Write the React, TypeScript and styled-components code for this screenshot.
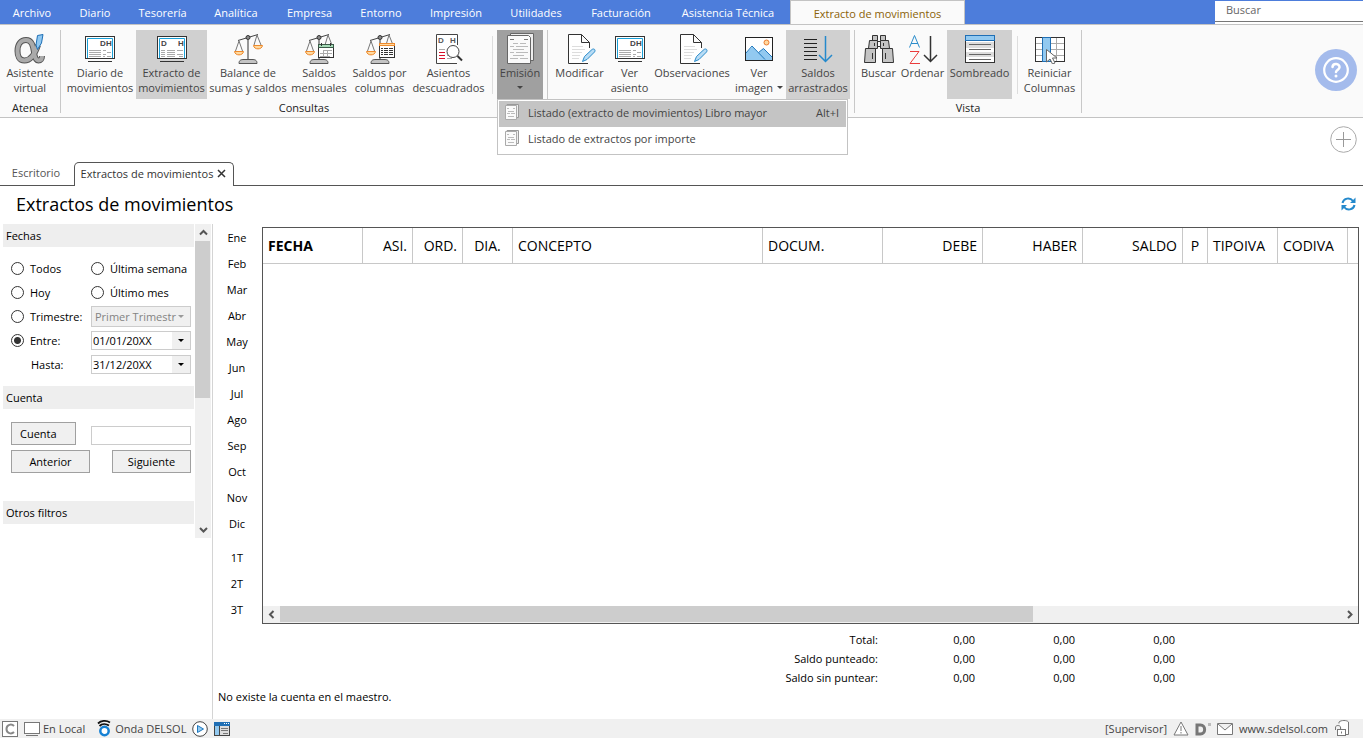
import React from "react";
import styled, { createGlobalStyle } from "styled-components";

const GlobalStyle = createGlobalStyle`
  *, *::before, *::after { box-sizing: border-box; }
  body { margin: 0; background: #fff; color: #000; }
  body, button, input, select { font-family: "Open Sans", "Noto Sans", sans-serif; font-size: 11px; line-height: 15px; }
  button { padding: 0; border: 0; background: none; color: inherit; }
  svg { display: block; flex: none; }
`;

/* ---------- page frame ---------- */

const Page = styled.div`
  display: flex;
  flex-direction: column;
  min-height: 100vh;
`;

const MenuBar = styled.nav`
  display: flex;
  height: 24px;
  background: #4d7ddb;
`;

const MenuTab = styled.button<{ $width: number; $active?: boolean }>`
  width: ${(p) => p.$width}px;
  height: ${(p) => (p.$active ? 25 : 24)}px;
  flex: none;
  white-space: nowrap;
  color: ${(p) => (p.$active ? "#8a6208" : "#fff")};
  background: ${(p) => (p.$active ? "#fafafa" : "transparent")};
  border: solid #c3c3c3;
  border-width: ${(p) => (p.$active ? "1px 1px 0" : "0")};
`;

const SearchBox = styled.div`
  width: 148px;
  margin-left: auto;
  padding-top: 1px;
  height: 24px;
`;

const SearchInput = styled.input`
  display: block;
  width: 100%;
  height: 21px;
  padding: 0 11px 4px;
  border: 0;
  border-bottom: 1px solid #777;
  background: #fff;
  outline: 0;
  box-shadow: 0 2px 0 #fff;
  &::placeholder { color: #666; opacity: 1; }
`;

/* ---------- ribbon ---------- */

const RibbonBar = styled.div`
  display: flex;
  align-items: flex-start;
  height: 94px;
  padding-top: 5px;
  background: #fafafa;
  border: solid #c3c3c3;
  border-width: 1px 0;
`;

const Group = styled.section<{ $pad?: number }>`
  display: flex;
  flex-direction: column;
  height: 83px;
  padding: 0 ${(p) => p.$pad ?? 4}px;
  border-right: 1px solid #c8c8c8;
`;

const GroupButtons = styled.div`
  display: flex;
  height: 69px;
  gap: 1px;
`;

const GroupLabel = styled.div`
  color: #222;
  text-align: center;
  line-height: 18px;
`;

const ThinRule = styled.div`
  width: 1px;
  height: 58px;
  margin: 6px 3px 0 4px;
  background: #ddd;
`;

const ToolButton = styled.button<{ $width: number; $tone?: "on" | "open" }>`
  display: flex;
  flex-direction: column;
  align-items: center;
  width: ${(p) => p.$width}px;
  height: 69px;
  padding-top: 2px;
  gap: 1px;
  white-space: nowrap;
  color: #444;
  background: ${(p) => (p.$tone === "on" ? "#d0d0d0" : p.$tone === "open" ? "#a0a0a0" : "transparent")};
`;

const ToolText = styled.span`
  display: flex;
  align-items: center;
  justify-content: center;
  height: 15px;
  gap: 4px;
`;

const ToolLabel = styled.span`
  display: flex;
  flex-direction: column;
  align-items: center;
`;

const Triangle = styled.i<{ $color?: string }>`
  display: block;
  border: 3px solid transparent;
  border-top-color: ${(p) => p.$color ?? "#444"};
  border-bottom: 0;
`;

const MenuAnchor = styled.div`
  position: relative;
`;

const DropMenu = styled.div`
  position: absolute;
  z-index: 2;
  top: 69px;
  left: 0;
  width: 351px;
  padding: 1px;
  background: #fff;
  border: 1px solid #c3c3c3;
`;

const MenuItem = styled.button<{ $active?: boolean }>`
  display: flex;
  align-items: center;
  gap: 8px;
  width: 100%;
  height: 26px;
  padding: 0 7px 4px 5px;
  color: #444;
  background: ${(p) => (p.$active ? "#c4c4c4" : "#fff")};
`;

const Shortcut = styled.span`
  margin-left: auto;
`;

const HelpButton = styled.button`
  margin: 19px 6px 0 auto;
  width: 42px;
  height: 42px;
`;

/* ---------- document tabs ---------- */

const TabStrip = styled.div`
  display: flex;
  align-items: flex-end;
  height: 68px;
  border-bottom: 1px solid #555;
`;

const DocTab = styled.div<{ $active?: boolean }>`
  display: flex;
  align-items: center;
  justify-content: center;
  gap: 4px;
  width: ${(p) => (p.$active ? 160 : 74)}px;
  height: 24px;
  margin-bottom: ${(p) => (p.$active ? -1 : 0)}px;
  padding: ${(p) => (p.$active ? "0 1px 2px 0" : "0 2px 1px 0")};
  color: ${(p) => (p.$active ? "#333" : "#555")};
  white-space: nowrap;
  background: #fff;
  border: solid #555;
  border-width: ${(p) => (p.$active ? "1px 1px 0" : "0")};
  border-radius: 5px 5px 0 0;
`;

const AddButton = styled.button`
  align-self: flex-start;
  margin: 7px 5px 0 auto;
`;

const TitleRow = styled.header`
  display: flex;
  align-items: center;
  justify-content: space-between;
  height: 38px;
  padding: 0 7px 3px 16px;
`;

const Title = styled.h1`
  margin: 0;
  font-size: 18px;
  line-height: 24px;
  font-weight: 400;
`;

/* ---------- side panel ---------- */

const Body = styled.div`
  display: flex;
  flex: 1;
`;

const Side = styled.aside`
  display: flex;
  align-items: flex-start;
  gap: 1px;
  width: 213px;
  padding-left: 3px;
  flex: none;
  border-right: 1px solid #d4d4d4;
`;

const Filters = styled.form`
  width: 191px;
`;

const SideHeading = styled.h2`
  margin: 0;
  height: 23px;
  padding: 0 3px;
  font-size: 11px;
  line-height: 23px;
  font-weight: 400;
  background: #eee;
`;

const DateGrid = styled.div`
  display: grid;
  grid-template-columns: 80px 100px;
  grid-auto-rows: 24px;
  align-items: center;
  padding: 9px 0 10px 8px;
`;

const RadioLabel = styled.label`
  display: flex;
  align-items: center;
  gap: 6px;
  white-space: nowrap;
`;

const Radio = styled.input`
  appearance: none;
  width: 13px;
  height: 13px;
  margin: 0;
  border: 1px solid #333;
  border-radius: 50%;
  background: #fff;
  &:checked { background: radial-gradient(circle, #333 0 3px, #fff 4px); }
`;

const PlainLabel = styled.label`
  padding-left: 20px;
`;

const Combo = styled.div<{ $muted?: boolean }>`
  display: flex;
  align-items: center;
  margin-top: 1px;
  height: ${(p) => (p.$muted ? 21 : 19)}px;
  border: 1px solid #ccc;
  background: ${(p) => (p.$muted ? "#f0f0f0" : "#fff")};
`;

const Select = styled.select`
  appearance: none;
  width: 86px;
  height: 19px;
  padding: 0 0 0 3px;
  border: 0;
  background: transparent;
  color: #838383;
  opacity: 1;
`;

const DateInput = styled.input`
  width: 80px;
  height: 17px;
  padding: 0 1px;
  border: 0;
  background: transparent;
`;

const DateButton = styled.button`
  display: flex;
  align-items: center;
  justify-content: center;
  width: 18px;
  height: 17px;
  background: #f0f0f0;
`;

const AccountArea = styled.div`
  display: grid;
  grid-template-columns: 80px 100px;
  row-gap: 5px;
  align-items: end;
  padding: 13px 0 28px 8px;
`;

const PushButton = styled.button<{ $width: number; $end?: boolean; $left?: boolean }>`
  width: ${(p) => p.$width}px;
  height: 23px;
  padding: 0 8px;
  justify-self: ${(p) => (p.$end ? "end" : "start")};
  text-align: ${(p) => (p.$left ? "left" : "center")};
  border: 1px solid #a0a0a0;
  background: #f0f0f0;
`;

const AccountInput = styled.input`
  width: 100px;
  height: 19px;
  border: 1px solid #ccc;
`;

const VScroll = styled.div`
  display: flex;
  flex-direction: column;
  width: 16px;
  height: 314px;
  background: #f0f0f0;
`;

const ScrollButton = styled.button`
  display: flex;
  align-items: center;
  justify-content: center;
  width: 17px;
  height: 17px;
  flex: none;
`;

const Track = styled.div`
  flex: 1;
  min-width: 0;
`;

const VThumb = styled.div`
  width: 15px;
  height: 56%;
  background: #cdcdcd;
`;

/* ---------- ledger ---------- */

const Main = styled.main`
  display: flex;
  flex-direction: column;
  flex: 1;
  min-width: 0;
`;

const Ledger = styled.div`
  display: flex;
  flex: 1;
`;

const Periods = styled.div`
  display: flex;
  flex-direction: column;
  align-items: center;
  width: 49px;
  padding-right: 1px;
`;

const Period = styled.button<{ $first?: boolean }>`
  height: 26px;
  margin-top: ${(p) => (p.$first ? 8 : 0)}px;
`;

const GridBox = styled.div`
  display: flex;
  flex-direction: column;
  flex: 1;
  min-width: 0;
  margin: 3px 4px 0 0;
  border: 1px solid #555;
`;

const Table = styled.table`
  table-layout: fixed;
  width: 100%;
  border-collapse: separate;
  border-spacing: 0;
`;

type Align = "left" | "right" | "center";

const Th = styled.th<{ $width?: number; $align?: Align; $bold?: boolean }>`
  width: ${(p) => (p.$width ? p.$width + "px" : "auto")};
  height: 36px;
  padding: 0 5px;
  font-size: 14px;
  line-height: 20px;
  white-space: nowrap;
  font-weight: ${(p) => (p.$bold ? 700 : 400)};
  text-align: ${(p) => p.$align ?? "left"};
  border: solid #c8c8c8;
  border-width: 0 1px 1px 0;
  &:last-child { border-right: 0; padding: 0; }
`;

const HScroll = styled.div`
  display: flex;
  height: 17px;
  margin-top: auto;
  background: #f0f0f0;
`;

const HThumb = styled.div`
  width: 71%;
  height: 16px;
  background: #cdcdcd;
`;

const Totals = styled.table`
  margin-top: 6px;
  border-spacing: 0;
  table-layout: fixed;
  width: 962px;
`;

const TotalName = styled.th`
  width: 665px;
  height: 19px;
  padding: 0;
  font-weight: 400;
  text-align: right;
`;

const TotalValue = styled.td`
  padding: 0;
  text-align: right;
  &:nth-child(n + 3) { width: 100px; }
`;

const Message = styled.p`
  margin: 0 0 13px;
  padding-left: 5px;
  line-height: 19px;
`;

/* ---------- status bar ---------- */

const StatusBar = styled.footer`
  display: flex;
  align-items: center;
  height: 19px;
  padding: 0 13px 0 2px;
  gap: 6px;
  color: #444;
  background: #f0f0f0;
`;

const StatusItem = styled.span<{ $last?: boolean }>`
  display: flex;
  align-items: center;
  gap: 3px;
  margin-right: ${(p) => (p.$last ? 0 : 6)}px;
`;

const StatusRight = styled.div`
  display: flex;
  align-items: center;
  gap: 6px;
  margin-left: auto;
`;

const SiteLink = styled.a`
  color: inherit;
  text-decoration: none;
`;

/* ---------- icons ---------- */

const Icon = ({ children }: { children: React.ReactNode }) => (
  <svg width="32" height="32" viewBox="0 0 32 32" fill="none" aria-hidden="true">
    {children}
  </svg>
);

const alphaPath = "M24 13C21 22 17 28.500 10.500 28.500C5 28.500 3.500 23.500 3.500 19C3.500 12 7 8 12 8C18 8 19 14 20 20C20.800 26 22 28.500 24.500 28.500C26.500 28.500 28 27 28 24";

const AlphaIcon = () => (
  <Icon>
    <path d={alphaPath} stroke="#555" strokeWidth="6" />
    <path d={alphaPath} stroke="#aaa" strokeWidth="4" />
    <path d="M23.500 3.500L29 2.500L27.500 11L23.500 17.500L22 13Z" fill="#8fc8f2" stroke="#1f6fb5" />
  </Icon>
);

const ScreenIcon = ({ spread }: { spread?: boolean }) => (
  <Icon>
    <rect x="1.500" y="4.500" width="29" height="22" fill="#fff" stroke="#333" />
    <path d="M3.500 26V6.500H28.500V26" stroke="#1ba1d8" />
    <path d="M4 29.500H28" stroke="#333" />
    <g fill="#444" fontFamily="Liberation Sans, sans-serif" fontSize="8" fontWeight="700">
      <text x={spread ? 5 : 16} y="14">D</text>
      <text x="22" y="14">H</text>
    </g>
    <path d={spread
      ? "M5 18.500H9M5 20.500H9M5 22.500H9M5 24.500H9M11 18.500H19M11 20.500H19M11 22.500H19M11 24.500H19M21 18.500H27M21 22.500H27M23 24.500H27"
      : "M5 18.500H17M5 20.500H17M5 22.500H17M5 24.500H17M19 18.500H22M19 22.500H22M23 20.500H27M19 24.500H21M23 24.500H27"} stroke="#aaa" />
  </Icon>
);

const Balance = ({ right }: { right?: boolean }) => (
  <>
    <path d="M16 8V28" stroke="#333" />
    <path d="M6 8.500L26 2.500" stroke="#444" />
    <circle cx="16" cy="5.500" r="2" fill="#888" stroke="#333" />
    <path d="M7 9L3.500 19M7 9L10.500 19M25 3L22 13M25 3L29 13" stroke="#777" />
    <path d="M2.500 19.500H11.500C11 24 3 24 2.500 19.500Z" fill="#ffd9a0" stroke="#ee8a2c" />
    {right && <path d="M21.500 13.500H30.500C30 18 22 18 21.500 13.500Z" fill="#ffd9a0" stroke="#ee8a2c" />}
    <path d="M7 31.500C7 28 9 27.500 12 27.500H20C23 27.500 25 28 25 31.500Z" fill="#c4c4c4" stroke="#555" />
  </>
);

const BalanceIcon = () => <Icon><Balance right /></Icon>;

const BalanceMonthIcon = () => (
  <Icon>
    <Balance />
    <rect x="15.500" y="12.500" width="15" height="13" fill="#fff" stroke="#333" />
    <rect x="15.500" y="12.500" width="15" height="3" fill="#a6dcb8" stroke="#3b5a48" />
    <path d="M18.500 11V14M27.500 11V14" stroke="#333" />
    <path d="M17 21.500H29M20 18.500H29M17 24.500H27M20.500 18V24M24.500 18V24" stroke="#aaa" />
  </Icon>
);

const BalanceColumnsIcon = () => (
  <Icon>
    <Balance />
    <rect x="15.500" y="11.500" width="15" height="14" fill="#fff" stroke="#333" />
    <rect x="15.500" y="11.500" width="15" height="2" fill="#ffd9a0" stroke="#ee8a2c" />
    <path d="M17 16.500H29M17 18.500H29M17 20.500H29M17 22.500H29" stroke="#333" strokeDasharray="2 1 4 1 4 1" />
  </Icon>
);

const UnbalancedIcon = () => (
  <Icon>
    <path d="M24 31.500H3.500V2.500H24.500V13" fill="#fff" stroke="#444" />
    <g fill="#555" fontFamily="Liberation Sans, sans-serif" fontSize="8" fontWeight="700">
      <text x="5" y="11">D</text>
      <text x="17" y="11">H</text>
    </g>
    <path d="M6 17.500H12M14 17.500H16" stroke="#aaa" />
    <path d="M6 20.500H12M6 23.500H12M6 26.500H12" stroke="#d8102a" />
    <path d="M14 23.500H19M14 26.500H19" stroke="#aaa" />
    <circle cx="20" cy="19.500" r="6" fill="#fff" stroke="#444" />
    <path d="M24.500 24L29 28.500" stroke="#333" strokeWidth="2" />
  </Icon>
);

const PagesIcon = () => (
  <Icon>
    <path d="M6.500 3V1.500H29.500V28.500H26" fill="#eee" stroke="#666" />
    <path d="M3.500 3.500H24.500L26.500 5.500V31.500H3.500Z" fill="#fafafa" stroke="#666" />
    <path d="M6 7.500H10M20 7.500H24" stroke="#777" />
    <path d="M9 11.500H14M16 11.500H22M6 14.500H10M12 14.500H24M9 17.500H20M6 20.500H10M12 20.500H24M9 23.500H20M6 26.500H14M16 26.500H24" stroke="#bbb" />
  </Icon>
);

const SmallPagesIcon = () => (
  <svg width="16" height="16" viewBox="0 0 16 16" fill="none" aria-hidden="true">
    <path d="M3 1.500V0.500H14.500V13.500H13" fill="#eee" stroke="#999" />
    <path d="M1.500 1.500H12.500V15.500H1.500Z" fill="#fafafa" stroke="#aaa" />
    <path d="M3 4.500H5M9 4.500H11M4 7.500H10M3 9.500H6M7 9.500H11M4 12.500H10" stroke="#bbb" />
  </svg>
);

const EditIcon = () => (
  <Icon>
    <path d="M24 31.500H4.500V2.500H17.500L25.500 10.500V16M17.500 2.500V10.500H25.500" fill="#fff" stroke="#333" />
    <path d="M8 14.500H19M8 17.500H21M8 20.500H18M8 23.500H16M8 26.500H15" stroke="#ddd" />
    <path d="M18.500 29.500L20.500 24.500L28 17.500C30 16 32 18 30.500 20L23 27.500Z" fill="#b8dcf5" stroke="#2a8ccb" />
  </Icon>
);

const ImageIcon = () => (
  <Icon>
    <rect x="2.500" y="5.500" width="27" height="23" fill="#fff" stroke="#222" />
    <path d="M3 21L9.500 14.500L22.500 28H3Z" fill="#92c9f0" />
    <path d="M15 21L20.500 16.500L29 25V28H22Z" fill="#92c9f0" />
    <path d="M3 21L9 14L22 27.500M15.500 20.500L20.500 16.500L29 25" stroke="#1f78be" />
    <circle cx="23.500" cy="10.500" r="2.500" fill="#ffd9a0" stroke="#ed7b2f" />
  </Icon>
);

const CarryIcon = () => (
  <Icon>
    <path d="M2 7.500H15M2 11.500H15M2 15.500H15M2 19.500H15M2 23.500H15M2 27.500H15" stroke="#222" />
    <path d="M23.500 4V29M17 23L23.500 29.500L30 23" stroke="#2489cc" strokeWidth="1.500" />
  </Icon>
);

const BinocularsIcon = () => (
  <Icon>
    <g fill="#c4c4c4" stroke="#333">
      <path d="M9.500 3.500H14.500V8.500H9.500ZM17.500 3.500H22.500V8.500H17.500Z" />
      <path d="M6.500 8.500H14.500V16.500H5.500ZM17.500 8.500H25.500L26.500 16.500H17.500Z" />
      <path d="M2.500 16.500H12.500V30.500H1.500ZM19.500 16.500H29.500L30.500 30.500H19.500Z" />
    </g>
    <path d="M15 9.500H17M15 14.500H17M9.500 21V27M22.500 21V27M11.500 11V14M20.500 11V14" stroke="#333" />
  </Icon>
);

const SortIcon = () => (
  <Icon>
    <path d="M2.500 15.500L7.500 3.500L12.500 15.500M4 11.500H11" stroke="#2a8ccb" />
    <path d="M3 19.500H12L3 31.500H13" stroke="#ea3b3b" />
    <path d="M23.500 4V29M17 23L23.500 29.500L30 23" stroke="#333" strokeWidth="1.500" />
  </Icon>
);

const ShadeIcon = () => (
  <Icon>
    <rect x="1.500" y="3.500" width="29" height="27" fill="#fff" stroke="#333" />
    <path d="M2 10H30V16H2ZM2 20H30V25H2Z" fill="#ddd" />
    <rect x="1.500" y="3.500" width="29" height="5" fill="#92c9f0" stroke="#1f6fb5" />
    <path d="M5 12.500H27M5 17.500H27M5 22.500H27M5 27.500H27" stroke="#666" />
  </Icon>
);

const ResetIcon = () => (
  <Icon>
    <rect x="1.500" y="5.500" width="29" height="24" fill="#fff" stroke="#333" />
    <path d="M2 11.500H30M2 17.500H30M2 23.500H30M22.500 6V29" stroke="#aaa" />
    <path d="M8.500 5.500H16.500V29.500H8.500Z" fill="#92c9f0" stroke="#1f6fb5" />
    <path d="M12.500 17.500V30L16 27L18.500 32L21 31L18.500 26H23Z" fill="#fff" stroke="#666" />
  </Icon>
);

const Chevron = ({ d }: { d: string }) => (
  <svg width="9" height="9" viewBox="0 0 9 9" fill="none" aria-hidden="true">
    <path d={d} stroke="#555" strokeWidth="2" />
  </svg>
);

/* ---------- data ---------- */

const menu: [string, number][] = [
  ["Archivo", 64], ["Diario", 62], ["Tesorería", 73], ["Analítica", 74], ["Empresa", 73],
  ["Entorno", 70], ["Impresión", 80], ["Utilidades", 80], ["Facturación", 90], ["Asistencia Técnica", 124],
];

const months = ["Ene", "Feb", "Mar", "Abr", "May", "Jun", "Jul", "Ago", "Sep", "Oct", "Nov", "Dic"];
const quarters = ["1T", "2T", "3T"];

const columns: { name: string; width: number; align?: Align; bold?: boolean }[] = [
  { name: "FECHA", width: 100, bold: true },
  { name: "ASI.", width: 50, align: "right" },
  { name: "ORD.", width: 50, align: "right" },
  { name: "DIA.", width: 50, align: "center" },
  { name: "CONCEPTO", width: 250 },
  { name: "DOCUM.", width: 120 },
  { name: "DEBE", width: 100, align: "right" },
  { name: "HABER", width: 100, align: "right" },
  { name: "SALDO", width: 100, align: "right" },
  { name: "P", width: 25, align: "center" },
  { name: "TIPOIVA", width: 70 },
  { name: "CODIVA", width: 70 },
];

const totals = ["Total:", "Saldo punteado:", "Saldo sin puntear:"];

type ToolProps = {
  icon: React.ReactNode;
  lines: string[];
  width: number;
  tone?: "on" | "open";
  arrow?: boolean;
};

const Tool = ({ icon, lines, width, tone, arrow }: ToolProps) => (
  <ToolButton type="button" $width={width} $tone={tone}>
    {icon}
    <ToolLabel>
      {lines.map((line, i) => (
        <ToolText key={i}>
          {line}
          {arrow && i === lines.length - 1 && <Triangle />}
        </ToolText>
      ))}
    </ToolLabel>
  </ToolButton>
);

export default function App() {
  return (
    <Page>
      <GlobalStyle />
      <MenuBar>
        {menu.map(([name, width]) => (
          <MenuTab key={name} type="button" $width={width}>{name}</MenuTab>
        ))}
        <MenuTab type="button" $width={175} $active>Extracto de movimientos</MenuTab>
        <SearchBox>
          <SearchInput type="search" placeholder="Buscar" aria-label="Buscar" />
        </SearchBox>
      </MenuBar>

      <RibbonBar>
        <Group $pad={0}>
          <GroupButtons>
            <Tool icon={<AlphaIcon />} lines={["Asistente", "virtual"]} width={60} />
          </GroupButtons>
          <GroupLabel>Atenea</GroupLabel>
        </Group>
        <Group>
          <GroupButtons>
            <Tool icon={<ScreenIcon />} lines={["Diario de", "movimientos"]} width={70} />
            <Tool icon={<ScreenIcon spread />} lines={["Extracto de", "movimientos"]} width={71} tone="on" />
            <Tool icon={<BalanceIcon />} lines={["Balance de", "sumas y saldos"]} width={80} />
            <Tool icon={<BalanceMonthIcon />} lines={["Saldos", "mensuales"]} width={60} />
            <Tool icon={<BalanceColumnsIcon />} lines={["Saldos por", "columnas"]} width={59} />
            <Tool icon={<UnbalancedIcon />} lines={["Asientos", "descuadrados"]} width={77} />
            <ThinRule />
            <MenuAnchor>
              <Tool icon={<PagesIcon />} lines={["Emisión", ""]} width={46} tone="open" arrow />
              <DropMenu role="menu">
                <MenuItem type="button" role="menuitem" $active>
                  <SmallPagesIcon />
                  Listado (extracto de movimientos) Libro mayor
                  <Shortcut>Alt+I</Shortcut>
                </MenuItem>
                <MenuItem type="button" role="menuitem">
                  <SmallPagesIcon />
                  Listado de extractos por importe
                </MenuItem>
              </DropMenu>
            </MenuAnchor>
          </GroupButtons>
          <GroupLabel>Consultas</GroupLabel>
        </Group>
        <Group>
          <GroupButtons>
            <Tool icon={<EditIcon />} lines={["Modificar"]} width={55} />
            <Tool icon={<ScreenIcon />} lines={["Ver", "asiento"]} width={43} />
            <Tool icon={<EditIcon />} lines={["Observaciones"]} width={80} />
            <Tool icon={<ImageIcon />} lines={["Ver", "imagen"]} width={52} arrow />
            <Tool icon={<CarryIcon />} lines={["Saldos", "arrastrados"]} width={64} tone="on" />
          </GroupButtons>
        </Group>
        <Group>
          <GroupButtons>
            <Tool icon={<BinocularsIcon />} lines={["Buscar"]} width={39} />
            <Tool icon={<SortIcon />} lines={["Ordenar"]} width={47} />
            <Tool icon={<ShadeIcon />} lines={["Sombreado"]} width={65} tone="on" />
            <ThinRule />
            <Tool icon={<ResetIcon />} lines={["Reiniciar", "Columnas"]} width={55} />
          </GroupButtons>
          <GroupLabel>Vista</GroupLabel>
        </Group>
        <HelpButton type="button" aria-label="Ayuda">
          <svg width="42" height="42" viewBox="0 0 42 42" fill="none" aria-hidden="true">
            <circle cx="21" cy="21" r="21" fill="#a4bbec" />
            <circle cx="21" cy="21" r="11.800" stroke="#fff" strokeWidth="2.200" />
            <path d="M17.500 18C18 13.500 25 14.500 24.500 18.500C24.300 20.500 21.500 21 21 23" stroke="#fff" strokeWidth="2.500" strokeLinecap="round" />
            <circle cx="21" cy="27" r="1.500" fill="#fff" />
          </svg>
        </HelpButton>
      </RibbonBar>

      <TabStrip>
        <DocTab>Escritorio</DocTab>
        <DocTab $active>
          Extractos de movimientos
          <button type="button" aria-label="Cerrar">
            <svg width="9" height="9" viewBox="0 0 9 9" fill="none" aria-hidden="true">
              <path d="M1 1L8 8M8 1L1 8" stroke="#333" strokeWidth="1.500" />
            </svg>
          </button>
        </DocTab>
        <AddButton type="button" aria-label="Añadir">
          <svg width="28" height="28" viewBox="0 0 28 28" fill="none" aria-hidden="true">
            <circle cx="13.500" cy="14.500" r="12.800" stroke="#aaa" />
            <path d="M13.500 7V22M6 14.500H21" stroke="#999" />
          </svg>
        </AddButton>
      </TabStrip>

      <TitleRow>
        <Title>Extractos de movimientos</Title>
        <button type="button" aria-label="Actualizar">
          <svg width="15" height="14" viewBox="0 0 15 14" fill="none" aria-hidden="true">
            <path d="M1.500 6C2.500 1 9 0 12 4M13.500 8C12.500 13 6 14 3 10" stroke="#2489cc" strokeWidth="2" />
            <path d="M14.500 0.500V6H9ZM0.500 13.500V8H6Z" fill="#2489cc" />
          </svg>
        </button>
      </TitleRow>

      <Body>
        <Side>
          <Filters>
            <SideHeading>Fechas</SideHeading>
            <DateGrid>
              <RadioLabel><Radio type="radio" name="rango" />Todos</RadioLabel>
              <RadioLabel><Radio type="radio" name="rango" />Última semana</RadioLabel>
              <RadioLabel><Radio type="radio" name="rango" />Hoy</RadioLabel>
              <RadioLabel><Radio type="radio" name="rango" />Último mes</RadioLabel>
              <RadioLabel><Radio type="radio" name="rango" />Trimestre:</RadioLabel>
              <Combo $muted>
                <Select disabled aria-label="Trimestre"><option>Primer Trimestr</option></Select>
                <Triangle $color="#999" />
              </Combo>
              <RadioLabel><Radio type="radio" name="rango" defaultChecked />Entre:</RadioLabel>
              <Combo>
                <DateInput aria-label="Entre" defaultValue="01/01/20XX" />
                <DateButton type="button" aria-label="Elegir fecha inicial"><Triangle $color="#000" /></DateButton>
              </Combo>
              <PlainLabel htmlFor="hasta">Hasta:</PlainLabel>
              <Combo>
                <DateInput id="hasta" defaultValue="31/12/20XX" />
                <DateButton type="button" aria-label="Elegir fecha final"><Triangle $color="#000" /></DateButton>
              </Combo>
            </DateGrid>
            <SideHeading>Cuenta</SideHeading>
            <AccountArea>
              <PushButton type="button" $width={65} $left>Cuenta</PushButton>
              <AccountInput aria-label="Cuenta" />
              <PushButton type="button" $width={79}>Anterior</PushButton>
              <PushButton type="button" $width={79} $end>Siguiente</PushButton>
            </AccountArea>
            <SideHeading>Otros filtros</SideHeading>
          </Filters>
          <VScroll>
            <ScrollButton type="button" aria-label="Subir"><Chevron d="M1 6.500L4.500 3L8 6.500" /></ScrollButton>
            <Track><VThumb /></Track>
            <ScrollButton type="button" aria-label="Bajar"><Chevron d="M1 3L4.500 6.500L8 3" /></ScrollButton>
          </VScroll>
        </Side>

        <Main>
          <Ledger>
            <Periods>
              {months.map((m) => <Period key={m} type="button">{m}</Period>)}
              {quarters.map((q, i) => <Period key={q} type="button" $first={i === 0}>{q}</Period>)}
            </Periods>
            <GridBox>
              <Table>
                <thead>
                  <tr>
                    {columns.map((c) => (
                      <Th key={c.name} scope="col" $width={c.width} $align={c.align} $bold={c.bold}>{c.name}</Th>
                    ))}
                    <Th as="td" />
                  </tr>
                </thead>
              </Table>
              <HScroll>
                <ScrollButton type="button" aria-label="Izquierda"><Chevron d="M6.500 1L3 4.500L6.500 8" /></ScrollButton>
                <Track><HThumb /></Track>
                <ScrollButton type="button" aria-label="Derecha"><Chevron d="M3 1L6.500 4.500L3 8" /></ScrollButton>
              </HScroll>
            </GridBox>
          </Ledger>
          <Totals>
            <tbody>
              {totals.map((name) => (
                <tr key={name}>
                  <TotalName scope="row">{name}</TotalName>
                  <TotalValue>0,00</TotalValue>
                  <TotalValue>0,00</TotalValue>
                  <TotalValue>0,00</TotalValue>
                </tr>
              ))}
            </tbody>
          </Totals>
          <Message>No existe la cuenta en el maestro.</Message>
        </Main>
      </Body>

      <StatusBar>
        <svg width="16" height="16" viewBox="0 0 16 16" fill="none" aria-hidden="true">
          <rect x="0.500" y="0.500" width="15" height="15" fill="#fff" stroke="#777" />
          <path d="M12 5C9.500 2.500 4.500 3.500 4.500 8C4.500 12.500 9.500 13.500 12 11" stroke="#888" strokeWidth="2" />
        </svg>
        <StatusItem>
          <svg width="16" height="16" viewBox="0 0 16 16" fill="none" aria-hidden="true">
            <rect x="0.500" y="1.500" width="15" height="11" fill="#fff" stroke="#777" />
            <path d="M2 14.500H14" stroke="#777" />
          </svg>
          En Local
        </StatusItem>
        <StatusItem $last>
          <svg width="15" height="17" viewBox="0 0 15 17" fill="none" aria-hidden="true">
            <path d="M1 3.500C4 0.500 9 0 13 2.500M2.500 6C5 3.500 9 3.500 12 5.500" stroke="#111" strokeWidth="1.800" />
            <circle cx="7.500" cy="11" r="4.200" fill="#fff" stroke="#1681d4" strokeWidth="2.500" />
          </svg>
          Onda DELSOL
        </StatusItem>
        <svg width="16" height="16" viewBox="0 0 16 16" fill="none" aria-hidden="true">
          <circle cx="8" cy="8" r="7.300" fill="#fff" stroke="#444" />
          <path d="M5.500 4.500L11.500 8L5.500 11.500Z" fill="#92c9f0" stroke="#1f78be" />
        </svg>
        <svg width="16" height="16" viewBox="0 0 16 16" fill="none" aria-hidden="true">
          <rect x="0.500" y="1.500" width="15" height="13" fill="#ddd" stroke="#444" />
          <path d="M0 1H16V5H0Z" fill="#1f6fb5" />
          <path d="M10 2.500H11M12 2.500H13M14 2.500H15" stroke="#fff" />
          <path d="M1 5H5V14H1Z" fill="#92c9f0" />
          <path d="M5.500 5V14" stroke="#444" />
          <path d="M7 7.500H14M7 9.500H14M9 12.500H14" stroke="#777" />
        </svg>
        <StatusRight>
          <span>[Supervisor]</span>
          <svg width="16" height="15" viewBox="0 0 16 15" fill="none" aria-hidden="true">
            <path d="M8 1L15 14H1Z" fill="#fff" stroke="#777" />
            <path d="M8 5V10M8 11V12.500" stroke="#777" />
          </svg>
          <svg width="16" height="14" viewBox="0 0 16 14" fill="none" aria-hidden="true">
            <path d="M2 3H5.500C11 3 11 12 5.500 12H2Z" stroke="#777" strokeWidth="3" />
            <rect x="13" y="1" width="3" height="3" fill="#bbb" />
          </svg>
          <svg width="16" height="14" viewBox="0 0 16 14" fill="none" aria-hidden="true">
            <path d="M0.500 1.500H15.500V12.500H0.500ZM1 2L8 8L15 2" fill="#fff" stroke="#777" />
          </svg>
          <SiteLink href="https://www.sdelsol.com">www.sdelsol.com</SiteLink>
          <svg width="16" height="17" viewBox="0 0 16 17" fill="none" aria-hidden="true">
            <path d="M5 3.500V2C7 0 13 0 14.500 2V14.500H12" fill="#fff" stroke="#777" />
            <path d="M1.500 10V7C2 5 6 5 6.500 7V9" stroke="#777" />
            <rect x="3.500" y="9.500" width="8" height="6" fill="#fff" stroke="#777" />
            <path d="M7.500 11.500V13.500" stroke="#777" />
          </svg>
        </StatusRight>
      </StatusBar>
    </Page>
  );
}
